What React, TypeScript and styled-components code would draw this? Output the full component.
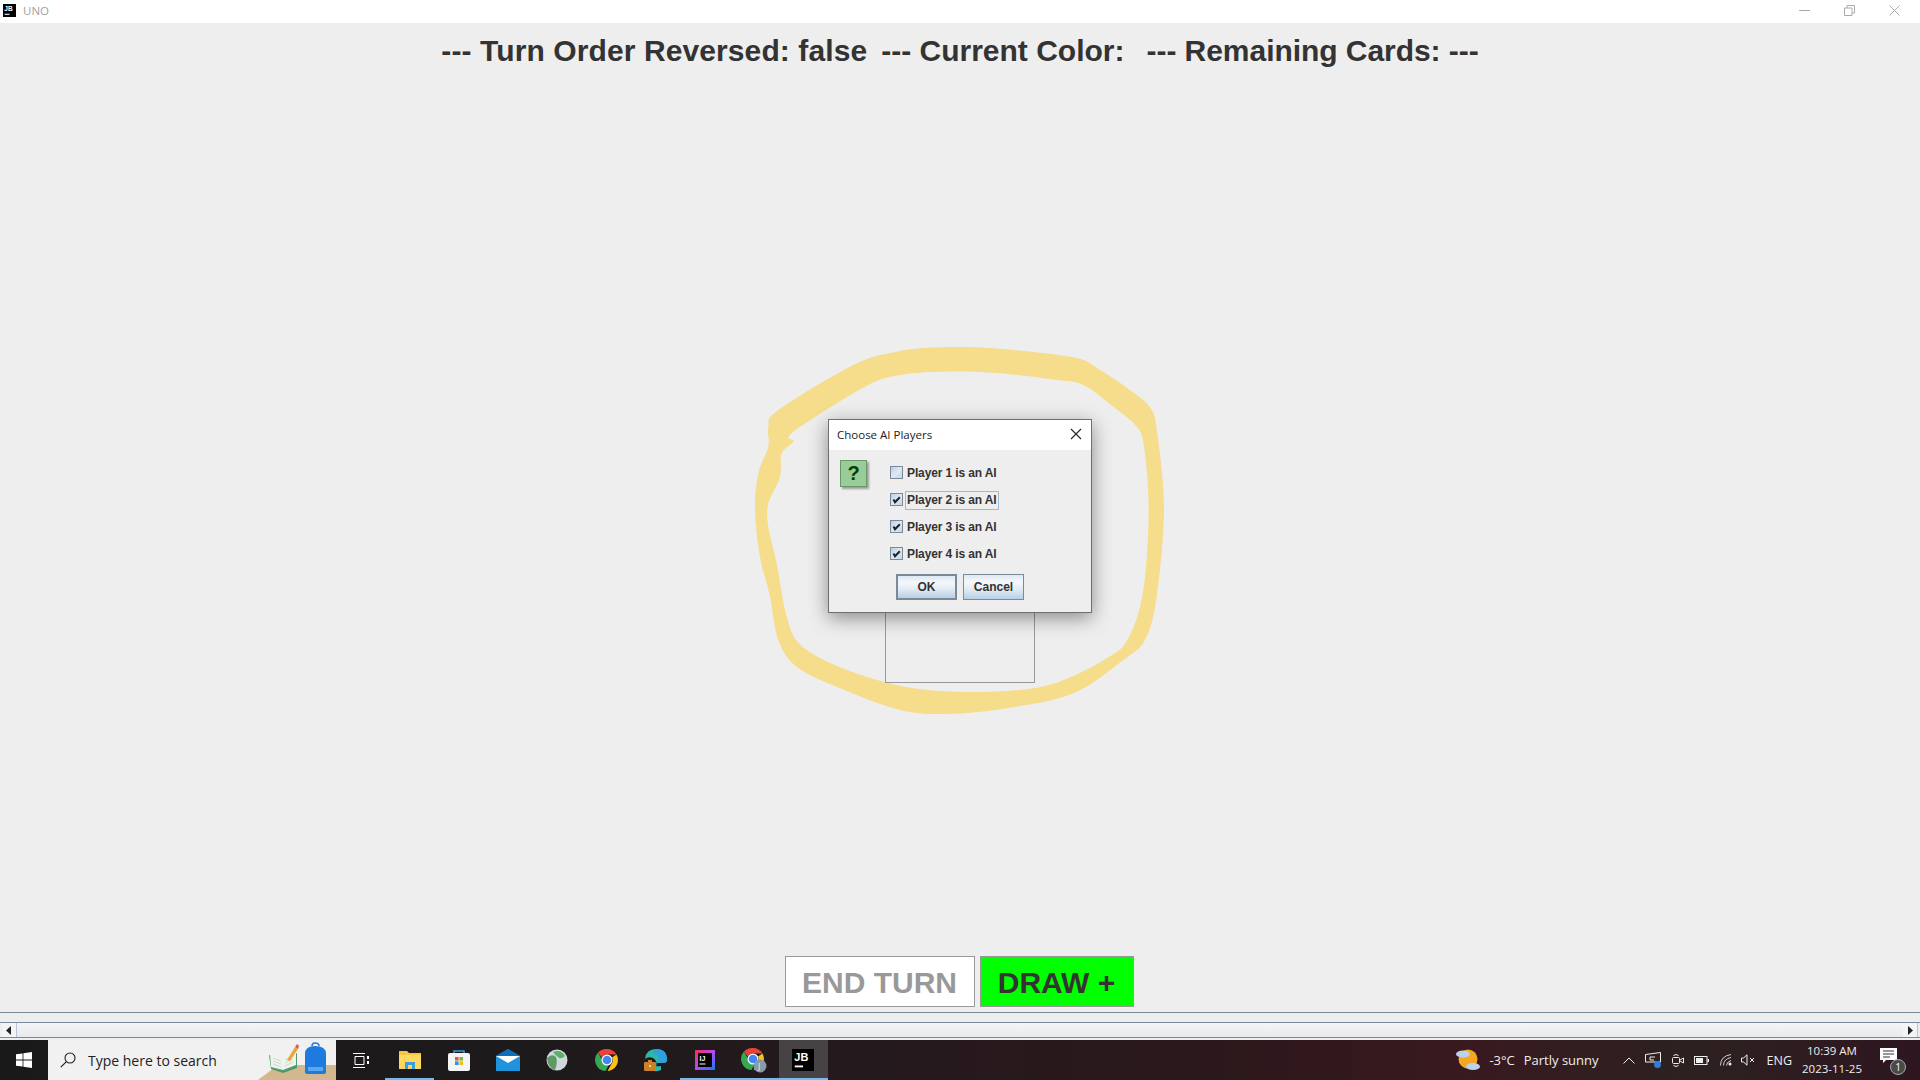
import React from 'react';
import styled, { createGlobalStyle } from 'styled-components';

const GlobalStyle = createGlobalStyle`
    html, body {
        margin: 0;
        padding: 0;
        height: 100%;
        overflow: hidden;
        background: #eeeeee;
    }
    #root {
        height: 100%;
    }
    * {
        box-sizing: border-box;
    }
`;

const Screen = styled.div`
    width: 1920px;
    height: 1080px;
    display: flex;
    flex-direction: column;
    background: #eeeeee;
    font-family: "Liberation Sans", Arial, sans-serif;
`;

const TitleBar = styled.div`
    height: 23px;
    flex: none;
    display: flex;
    align-items: center;
    background: #ffffff;
    padding: 0 20px 3px 3px;
`;

const TitleText = styled.span`
    margin-left: 7px;
    font-family: "Open Sans", sans-serif;
    font-size: 11.5px;
    color: #a0a0a0;
`;

const WindowControls = styled.div`
    margin-left: auto;
    display: flex;
    align-items: center;
    gap: 34px;
`;

const Heading = styled.div`
    flex: none;
    height: 53px;
    display: flex;
    align-items: center;
    justify-content: center;
    gap: 14px;
    padding-top: 3px;
    color: #333333;
    font-size: 30px;
    font-weight: 700;
    white-space: pre;
`;

const HeadingPart = styled.span<{ $spacing?: number }>`
    letter-spacing: ${p => p.$spacing ?? 0}px;
`;

const ColorSwatch = styled.span`
    display: inline-block;
    width: 8px;
`;

const Board = styled.div`
    flex: 1;
    position: relative;
`;

const Ring = styled.svg`
    position: absolute;
    left: 740px;
    top: 254px;
    width: 450px;
    height: 400px;
`;

const CardSlot = styled.div`
    position: absolute;
    left: 885px;
    top: 536px;
    width: 150px;
    height: 71px;
    border: 1px solid #999999;
    border-top: none;
`;

const Dialog = styled.div`
    position: absolute;
    left: 828px;
    top: 343px;
    width: 264px;
    height: 194px;
    border: 1px solid #6f6f6f;
    background: #eeeeee;
    box-shadow: 0 5px 18px rgba(0, 0, 0, 0.42);
`;

const DialogTitle = styled.div`
    height: 30px;
    display: flex;
    align-items: center;
    justify-content: space-between;
    padding: 0 9px 2px 8px;
    background: #ffffff;
    font-family: "Open Sans", sans-serif;
    font-size: 11.5px;
    color: #222222;
`;

const DialogBody = styled.div`
    display: flex;
    padding: 10px 0 0 11px;
`;

const QuestionIcon = styled.div`
    width: 27px;
    height: 27px;
    flex: none;
    display: flex;
    align-items: center;
    justify-content: center;
    background: #99cc99;
    border: 1px solid #669966;
    box-shadow: 2px 2px 2px rgba(0, 0, 0, 0.35);
    color: #004400;
    font-size: 20px;
    font-weight: 700;
`;

const OptionColumn = styled.div`
    display: flex;
    flex-direction: column;
    margin-left: 23px;
`;

const OptionRow = styled.div`
    height: 27px;
    display: flex;
    align-items: center;
    gap: 2px;
`;

const CheckBox = styled.div`
    width: 13px;
    height: 13px;
    margin-top: -2px;
    display: flex;
    align-items: center;
    justify-content: center;
    border: 1px solid #7a8a99;
    background: linear-gradient(135deg, #b8cfe5 0%, #dfe8f2 50%, #c6d7e8 100%);
`;

const OptionLabel = styled.span<{ $focused?: boolean }>`
    padding: 1px 1px 2px 1px;
    border: 1px solid ${p => (p.$focused ? '#a3b8cc' : 'transparent')};
    font-size: 12px;
    font-weight: 700;
    letter-spacing: -0.12px;
    color: #333333;
`;

const DialogButtons = styled.div`
    display: flex;
    gap: 6px;
    margin: 6px 0 0 67px;
`;

const DialogButton = styled.div<{ $primary?: boolean }>`
    width: 61px;
    height: 26px;
    display: flex;
    align-items: center;
    justify-content: center;
    border: ${p => (p.$primary ? '2px' : '1px')} solid #7a8a99;
    background: linear-gradient(180deg, #dde8f3 0%, #f4f8fb 30%, #e2ebf4 60%, #b8cfe5 100%);
    font-size: 12px;
    font-weight: 700;
    color: #333333;
`;

const ActionRow = styled.div`
    flex: none;
    height: 56px;
    display: flex;
    justify-content: center;
    gap: 5px;
    padding: 0 2px 5px 0;
`;

const ActionButton = styled.div<{ $bg: string; $fg: string; $width: number }>`
    width: ${p => p.$width}px;
    height: 51px;
    display: flex;
    align-items: center;
    justify-content: center;
    padding-top: 3px;
    background: ${p => p.$bg};
    color: ${p => p.$fg};
    border: 1px solid #999999;
    font-size: 30px;
    font-weight: 700;
`;

const ScrollPane = styled.div`
    flex: none;
    height: 28px;
    border-top: 1px solid #7a8a99;
    display: flex;
    flex-direction: column;
    justify-content: flex-end;
    padding: 0 0 2px 0;
`;

const ScrollBar = styled.div`
    height: 16px;
    display: flex;
    border-top: 1px solid #7a8a99;
    border-bottom: 1px solid #7a8a99;
    background: #eceff2;
    padding: 0 2px;
`;

const ScrollArrow = styled.div`
    width: 15px;
    display: flex;
    align-items: center;
    justify-content: center;
    background: #f2f4f7;
    border-right: 1px solid #b8c4d0;
`;

const ScrollThumb = styled.div`
    flex: 1;
    background: linear-gradient(180deg, #f3f5f7 0%, #e8ebee 100%);
`;

const Taskbar = styled.div`
    flex: none;
    height: 40px;
    display: flex;
    align-items: center;
    background: linear-gradient(90deg, #191919 0%, #1e1a1c 30%, #2b181c 62%, #38191f 76%, #2d2120 88%, #2e1620 100%);
`;

const StartButton = styled.div`
    width: 48px;
    height: 40px;
    flex: none;
    display: flex;
    align-items: center;
    justify-content: center;
`;

const SearchBox = styled.div`
    width: 288px;
    height: 40px;
    flex: none;
    display: flex;
    align-items: center;
    padding-left: 12px;
    background: #f1f1f1;
    overflow: hidden;
`;

const SearchText = styled.span`
    margin-left: 12px;
    font-family: "Open Sans", sans-serif;
    font-size: 14px;
    color: #222222;
    white-space: nowrap;
`;

const SearchArt = styled.svg`
    margin-left: auto;
    flex: none;
`;

const TaskButton = styled.div<{ $active?: boolean; $running?: boolean }>`
    width: 49.2px;
    height: 40px;
    flex: none;
    display: flex;
    align-items: center;
    justify-content: center;
    background: ${p => (p.$active ? '#474344' : 'transparent')};
    box-shadow: ${p => (p.$running ? 'inset 0 -2px 0 #76b9ed' : 'none')};
`;

const Tray = styled.div`
    margin-left: auto;
    height: 40px;
    display: flex;
    align-items: center;
    color: #eeeeee;
    font-family: "Open Sans", sans-serif;
    font-size: 13px;
`;

const TrayText = styled.span<{ $ml: number; $small?: boolean }>`
    margin-left: ${p => p.$ml}px;
    font-size: ${p => (p.$small ? 12.5 : 13)}px;
    white-space: nowrap;
`;

const TrayIcon = styled.svg<{ $ml: number }>`
    margin-left: ${p => p.$ml}px;
    flex: none;
`;

const Clock = styled.div`
    width: 68px;
    margin-left: 6px;
    display: flex;
    flex-direction: column;
    align-items: center;
    gap: 2px;
    font-size: 11.5px;
    line-height: 16px;
`;

const NotifyWrap = styled.div`
    position: relative;
    margin: 0 18px 0 14px;
    width: 22px;
    height: 24px;
`;

const NotifyBadge = styled.div`
    position: absolute;
    right: -4px;
    bottom: -3px;
    width: 16px;
    height: 16px;
    border-radius: 50%;
    background: #4a4a4a;
    border: 1px solid #aaaaaa;
    display: flex;
    align-items: center;
    justify-content: center;
    font-size: 10px;
    color: #ffffff;
`;

const outer = [[600,52],[760,55],[1000,82],[1080,120],[1170,180],[1232,235],[1252,310],[1272,540],[1250,800],[1215,930],[1150,990],[1000,1090],[800,1135],[620,1152],[480,1140],[300,1075],[170,1010],[115,930],[90,800],[60,680],[45,540],[55,430],[85,350],[85,290],[115,240],[340,105],[470,65]];
const inner = [[600,125],[760,128],[950,150],[1030,165],[1120,230],[1190,290],[1212,350],[1226,540],[1210,780],[1165,925],[1100,985],[950,1058],[800,1083],[600,1083],[440,1058],[280,1003],[180,943],[140,860],[110,700],[85,590],[85,520],[120,440],[125,370],[160,335],[160,305],[375,170],[480,135]];

// closed catmull-rom curve through the hand-drawn outline
const smooth = (pts: number[][]) => {
    const at = (i: number) => pts[(i + pts.length) % pts.length];
    let d = `M${pts[0][0]} ${pts[0][1]}`;
    pts.forEach((p, i) => {
        const [a, b, c] = [at(i - 1), at(i + 1), at(i + 2)];
        const c1 = [p[0] + (b[0] - a[0]) / 6, p[1] + (b[1] - a[1]) / 6];
        const c2 = [b[0] - (c[0] - p[0]) / 6, b[1] - (c[1] - p[1]) / 6];
        d += `C${c1[0]} ${c1[1]} ${c2[0]} ${c2[1]} ${b[0]} ${b[1]}`;
    });
    return d + 'Z';
};

const JbLogo = ({ size }: { size: number }) => (
    <svg width={size} height={size} viewBox="0 0 24 24">
        <rect width="24" height="24" fill="#000" />
        <text x="2.5" y="13.5" fontSize="12" fontWeight="700" fontFamily="Liberation Sans" fill="#fff">JB</text>
        <rect x="3" y="18" width="9" height="2" fill="#fff" />
    </svg>
);

const Chrome = ({ size }: { size: number }) => (
    <svg width={size} height={size} viewBox="0 0 24 24">
        <path d="M12 1a11 11 0 0 1 9.5 5.5H12a5.5 5.5 0 0 0-5 3.2L3 4.6A11 11 0 0 1 12 1z" fill="#ea4335" />
        <path d="M21.5 6.500A11 11 0 0 1 12.500 23l4.300-7.500a5.500 5.500 0 0 0 .2-6z" fill="#fbc116" />
        <path d="M3 4.600l4.500 7.900a5.500 5.500 0 0 0 6 4.800L10.500 23A11 11 0 0 1 3 4.600z" fill="#34a853" />
        <circle cx="12" cy="12" r="5.500" fill="#fff" />
        <circle cx="12" cy="12" r="4.300" fill="#4285f4" />
    </svg>
);

const Check = () => (
    <svg width="9" height="9" viewBox="0 0 9 9">
        <path d="M1.500 4.500L3 7.300L7.800 2.200" fill="none" stroke="#1c232b" strokeWidth="2" />
    </svg>
);

const players = [
    { id: 1, checked: false },
    { id: 2, checked: true, focused: true },
    { id: 3, checked: true },
    { id: 4, checked: true },
];

const App = () => {
    return (
        <Screen>
            <GlobalStyle />
            <TitleBar>
                <JbLogo size={13} />
                <TitleText>UNO</TitleText>
                <WindowControls>
                    <svg width="11" height="11" viewBox="0 0 11 11"><path d="M0 5.500H11" stroke="#aaa" /></svg>
                    <svg width="11" height="11" viewBox="0 0 11 11"><path d="M.5 3h7.500v7.500H.5zM3 3V.5h7.500V8H8" fill="none" stroke="#aaa" /></svg>
                    <svg width="11" height="11" viewBox="0 0 11 11"><path d="M.5 .5L10.500 10.500M10.500 .5L.5 10.500" stroke="#aaa" /></svg>
                </WindowControls>
            </TitleBar>

            <Heading>
                <HeadingPart $spacing={0.1}>--- Turn Order Reversed: false</HeadingPart>
                <HeadingPart>--- Current Color:<ColorSwatch /></HeadingPart>
                <HeadingPart $spacing={-0.05}>--- Remaining Cards: ---</HeadingPart>
            </Heading>

            <Board>
                <Ring viewBox="0 0 1350 1200">
                    <path d={smooth(outer) + smooth(inner)} fill="#f5dd8c" fillRule="evenodd" />
                </Ring>
                <CardSlot />
                <Dialog>
                    <DialogTitle>
                        <span>Choose AI Players</span>
                        <svg width="12" height="12" viewBox="0 0 12 12">
                            <path d="M1 1L11 11M11 1L1 11" stroke="#222" strokeWidth="1.100" />
                        </svg>
                    </DialogTitle>
                    <DialogBody>
                        <QuestionIcon>?</QuestionIcon>
                        <OptionColumn>
                            {players.map(player => (
                                <OptionRow key={player.id}>
                                    <CheckBox>{player.checked && <Check />}</CheckBox>
                                    <OptionLabel $focused={player.focused}>Player {player.id} is an AI</OptionLabel>
                                </OptionRow>
                            ))}
                        </OptionColumn>
                    </DialogBody>
                    <DialogButtons>
                        <DialogButton $primary>OK</DialogButton>
                        <DialogButton>Cancel</DialogButton>
                    </DialogButtons>
                </Dialog>
            </Board>

            <ActionRow>
                <ActionButton $bg="#ffffff" $fg="#999999" $width={190}>END TURN</ActionButton>
                <ActionButton $bg="#00ff00" $fg="#333333" $width={154}>DRAW +</ActionButton>
            </ActionRow>

            <ScrollPane>
                <ScrollBar>
                    <ScrollArrow>
                        <svg width="6" height="9" viewBox="0 0 6 9"><path d="M5 0V9L0 4.500z" fill="#222" /></svg>
                    </ScrollArrow>
                    <ScrollThumb />
                    <ScrollArrow>
                        <svg width="6" height="9" viewBox="0 0 6 9"><path d="M1 0V9L6 4.500z" fill="#222" /></svg>
                    </ScrollArrow>
                </ScrollBar>
            </ScrollPane>

            <Taskbar>
                <StartButton>
                    <svg width="16" height="16" viewBox="0 0 16 16">
                        <path d="M0 2.300L6.600 1.400V7.600H0zM7.400 1.300L16 0V7.600H7.400zM0 8.400H6.600V14.600L0 13.700zM7.400 8.400H16V16L7.400 14.700z" fill="#fff" />
                    </svg>
                </StartButton>
                <SearchBox>
                    <svg width="16" height="16" viewBox="0 0 16 16">
                        <circle cx="10" cy="6" r="5" fill="none" stroke="#222" strokeWidth="1.100" />
                        <path d="M6.400 9.600L.8 15.200" stroke="#222" strokeWidth="1.200" />
                    </svg>
                    <SearchText>Type here to search</SearchText>
                    <SearchArt width="78" height="40" viewBox="0 0 78 40">
                        <path d="M20 25H78V40H0z" fill="#d3b78f" />
                        <path d="M11 15L25 20L39 13L39 28L25 33L13 29z" fill="#4f9a68" />
                        <path d="M12 14L25 18L38 11L38 25L25 30L13 27z" fill="#eef3ee" />
                        <path d="M15 18L23 21M15 21L23 24M15 24L23 27M27 20L35 16M27 23L35 19M27 26L35 22" stroke="#b8c4bb" strokeWidth=".6" />
                        <path d="M29 20L37 7L40 9L32 21z" fill="#f0a23c" />
                        <path d="M37 7L39 4L41 6L40 9z" fill="#e2574c" />
                        <path d="M47 14Q47 6 57 6Q68 6 68 14V32Q68 34 65 34H50Q47 34 47 32z" fill="#1f7ae0" />
                        <path d="M54 6Q54 3 57 3Q61 3 61 6" fill="none" stroke="#1f7ae0" strokeWidth="1.500" />
                        <path d="M50 27H65V31H50z" fill="#5aa7f2" />
                    </SearchArt>
                </SearchBox>

                <TaskButton>
                    <svg width="16" height="15" viewBox="0 0 16 15">
                        <path d="M0 .5H12M0 14.500H12M2 3.500H11V11.500H2z" fill="none" stroke="#fff" />
                        <path d="M14 3h2v3h-2zM14 8h2v3h-2z" fill="#fff" />
                    </svg>
                </TaskButton>
                <TaskButton $running>
                    <svg width="22" height="20" viewBox="0 0 22 20">
                        <path d="M0 1H8L10 3H22V19H0z" fill="#f4c542" />
                        <path d="M0 5H22V19H0z" fill="#ffd75e" />
                        <path d="M6 12H16V19H13V15H9V19H6z" fill="#3aa0da" />
                    </svg>
                </TaskButton>
                <TaskButton>
                    <svg width="24" height="24" viewBox="0 0 24 24">
                        <path d="M7 6V3H17V6" fill="none" stroke="#36a2dc" strokeWidth="1.500" />
                        <rect x="1" y="5" width="22" height="18" rx="2" fill="#f5f5f5" />
                        <rect x="8" y="9" width="3.600" height="3.600" fill="#e8553a" />
                        <rect x="12.400" y="9" width="3.600" height="3.600" fill="#7dba2f" />
                        <rect x="8" y="13.400" width="3.600" height="3.600" fill="#1d9be0" />
                        <rect x="12.400" y="13.400" width="3.600" height="3.600" fill="#f6bb18" />
                    </svg>
                </TaskButton>
                <TaskButton>
                    <svg width="24" height="22" viewBox="0 0 24 22">
                        <path d="M0 7L12 0L24 7V22H0z" fill="#1f94dc" />
                        <path d="M0 7L12 0L24 7L12 13z" fill="#0f6fb8" />
                        <path d="M0 7H24L12 14z" fill="#ffffff" />
                    </svg>
                </TaskButton>
                <TaskButton>
                    <svg width="22" height="22" viewBox="0 0 22 22">
                        <circle cx="11" cy="11" r="10.500" fill="#cfd8dc" />
                        <path d="M1 9Q6 4 10 8Q12 13 9 21Q2 19 1 9z" fill="#5e9a62" />
                        <path d="M7 3Q15 0 19 7Q15 11 12 8Q9 6 7 3z" fill="#58b368" />
                    </svg>
                </TaskButton>
                <TaskButton><Chrome size={24} /></TaskButton>
                <TaskButton>
                    <svg width="24" height="24" viewBox="0 0 24 24">
                        <path d="M1 11Q2 1 12 1Q23 1 23 12Q23 15 19 15H9Q10 19 17 18V22Q13 24 10 23Q16 14 9 10Q4 8 1 11z" fill="#2fb6a8" />
                        <path d="M12 1Q23 1 23 12Q23 15 19 15H14Q17 6 9 5Q11 2 12 1z" fill="#2f9fe0" />
                        <rect x="0" y="14" width="12" height="9" rx="1" fill="#c9822a" />
                        <rect x="4" y="12" width="4" height="2" fill="#c9822a" />
                        <rect x="5" y="17" width="2" height="2" fill="#f5d28a" />
                    </svg>
                </TaskButton>
                <TaskButton $running>
                    <svg width="20" height="20" viewBox="0 0 20 20">
                        <defs>
                            <linearGradient id="ij" x1="0" y1="0" x2="1" y2="1">
                                <stop offset="0" stopColor="#fe2857" />
                                <stop offset="0.5" stopColor="#b74af7" />
                                <stop offset="1" stopColor="#087cfa" />
                            </linearGradient>
                        </defs>
                        <rect width="20" height="20" fill="url(#ij)" />
                        <rect x="3" y="3" width="14" height="14" fill="#000" />
                        <text x="4.500" y="10.500" fontSize="7" fontWeight="700" fontFamily="Liberation Sans" fill="#fff">IJ</text>
                        <rect x="4.500" y="13.500" width="6" height="1" fill="#fff" />
                    </svg>
                </TaskButton>
                <TaskButton $running>
                    <svg width="26" height="26" viewBox="0 0 26 26">
                        <g transform="translate(0 0)"><Chrome size={24} /></g>
                        <circle cx="19" cy="19" r="6.500" fill="#8a9aa8" />
                        <text x="17" y="22.500" fontSize="9" fontFamily="Open Sans" fill="#e6e6e6">J</text>
                    </svg>
                </TaskButton>
                <TaskButton $active $running><JbLogo size={22} /></TaskButton>

                <Tray>
                    <TrayIcon $ml={0} width="24" height="24" viewBox="0 0 24 24">
                        <circle cx="12" cy="11" r="9.500" fill="#f5a623" />
                        <ellipse cx="7" cy="6" rx="7" ry="3.600" fill="#b9d3ec" />
                        <ellipse cx="17" cy="18.500" rx="7" ry="3.600" fill="#b9d3ec" />
                    </TrayIcon>
                    <TrayText $ml={9}>-3°C</TrayText>
                    <TrayText $ml={9}>Partly sunny</TrayText>
                    <TrayIcon $ml={24} width="12" height="7" viewBox="0 0 12 7">
                        <path d="M.5 6.500L6 1L11.500 6.500" fill="none" stroke="#eee" />
                    </TrayIcon>
                    <TrayIcon $ml={10} width="16" height="16" viewBox="0 0 16 16">
                        <path d="M.5 2.500L15.500.5V10H.5z" fill="none" stroke="#eee" />
                        <path d="M5 5H10M5 5V8H9" fill="none" stroke="#eee" />
                        <circle cx="12.500" cy="12.500" r="3.500" fill="#2b7fd4" />
                    </TrayIcon>
                    <TrayIcon $ml={11} width="12" height="15" viewBox="0 0 12 15">
                        <path d="M1.500 2.500Q4 .5 6.500 2.500M1.500 12.500Q4 14.500 6.500 12.500" fill="none" stroke="#eee" />
                        <rect x=".5" y="4.500" width="7" height="6" rx="1" fill="none" stroke="#eee" />
                        <path d="M8 7L11.500 5V10L8 8" fill="none" stroke="#eee" />
                    </TrayIcon>
                    <TrayIcon $ml={10} width="15" height="9" viewBox="0 0 15 9">
                        <rect x=".5" y=".5" width="12.500" height="8" fill="none" stroke="#eee" />
                        <rect x="2" y="2" width="7" height="5" fill="#eee" />
                        <rect x="13.500" y="3" width="1.500" height="3" fill="#eee" />
                    </TrayIcon>
                    <TrayIcon $ml={11} width="12" height="12" viewBox="0 0 12 12">
                        <path d="M.5 11.500Q.5 2 11 .5M3.500 11.500Q3.500 5 11 3.500M6.500 11.500Q6.500 8 11 6.500" fill="none" stroke="#cfcfcf" />
                        <circle cx="10" cy="10" r="1.500" fill="#eee" />
                    </TrayIcon>
                    <TrayIcon $ml={9} width="14" height="12" viewBox="0 0 14 12">
                        <path d="M.5 4H2.500L6 .8V11.200L2.500 8H.5z" fill="none" stroke="#eee" />
                        <path d="M9 4L13 8M13 4L9 8" stroke="#eee" />
                    </TrayIcon>
                    <TrayText $ml={12} $small>ENG</TrayText>
                    <Clock>
                        <span>10:39 AM</span>
                        <span>2023-11-25</span>
                    </Clock>
                    <NotifyWrap>
                        <svg width="18" height="16" viewBox="0 0 18 16">
                            <path d="M0 0H17V12H6L3 15V12H0z" fill="#fff" />
                            <path d="M3 3H14M3 6H14M3 9H10" stroke="#333" />
                        </svg>
                        <NotifyBadge>1</NotifyBadge>
                    </NotifyWrap>
                </Tray>
            </Taskbar>
        </Screen>
    );
};

export default App;
